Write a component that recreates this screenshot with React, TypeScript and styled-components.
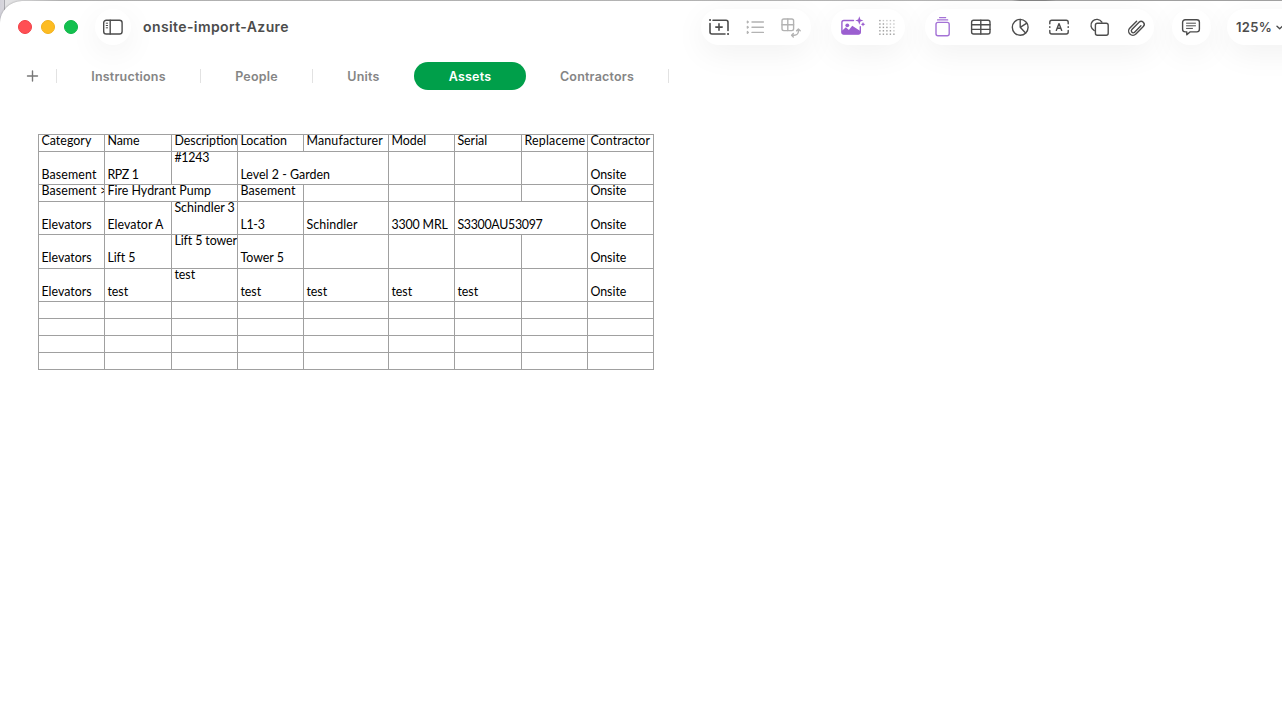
import React from "react";
import styled, { createGlobalStyle } from "styled-components";

const GlobalStyle = createGlobalStyle`
  * { box-sizing: border-box; }
  html, body, #root { height: 100%; }
  body { margin: 0; overflow: hidden; background: #c4c4c6; font-family: Inter, "Liberation Sans", sans-serif; }
`;

const Desktop = styled.div`
  height: 721px;
  padding-top: 1px;
  overflow: hidden;
  background: linear-gradient(90deg, #d3d2da 0, #d8d7dd 4px, #a9a9af 4.5px, #e3e3e5 5.5px, #dededf 30px, #c2c2c2 60px, #c6c6c6 1012px, #8f8f8f 1020px, #8f8f8f 1045px, #b0b0b0 1056px, #b0b0b0 1282px);
`;

const Window = styled.main`
  height: 720px;
  background: #fff;
  border-top-left-radius: 22px;
  box-shadow: 0 0 2px rgba(0, 0, 0, 0.35);
  overflow: hidden;
`;

const TitleBar = styled.header`
  display: flex;
  align-items: center;
  height: 52px;
  padding-left: 18px;
  width: 1320px;
`;

const Lights = styled.div`
  display: flex;
  gap: 9px;
`;

const Light = styled.span<{ $fill: string; $edge: string }>`
  width: 14px;
  height: 14px;
  border-radius: 50%;
  background: ${(p) => p.$fill};
  border: 1px solid ${(p) => p.$edge};
`;

const Pill = styled.div<{ $width: number; $gap: number }>`
  position: relative;
  flex: none;
  width: ${(p) => p.$width}px;
  height: 36px;
  margin-left: ${(p) => p.$gap}px;
  border-radius: 18px;
  background: #fff;
  box-shadow: 0 8px 32px rgba(0, 0, 0, 0.06);
  display: flex;
  align-items: center;
`;

const Title = styled.h1`
  margin: 0 0 0 12px;
  width: 558px;
  font-size: 14px;
  line-height: 20px;
  font-weight: 600;
  letter-spacing: 0.4px;
  color: #4c4c4c;
  white-space: nowrap;
`;

const Icon = styled.svg<{ $gap: number; $color?: string }>`
  flex: none;
  width: 24px;
  height: 24px;
  margin-left: ${(p) => p.$gap}px;
  overflow: visible;
  fill: none;
  stroke: ${(p) => p.$color ?? "#4c4c4c"};
  stroke-width: 1.4;
  stroke-linecap: round;
  stroke-linejoin: round;
`;

const Zoom = styled.span`
  margin-left: 9px;
  width: 38px;
  font-size: 13px;
  font-weight: 600;
  color: #4c4c4c;
  letter-spacing: 0.35px;
`;

const Tabs = styled.nav`
  display: flex;
  align-items: center;
  height: 28px;
  margin-top: 9px;
  padding-left: 21px;
`;

const Tab = styled.button<{ $width: number; $active?: boolean }>`
  flex: none;
  width: ${(p) => p.$width}px;
  height: 28px;
  padding: 0;
  border: 0;
  border-radius: 14px;
  background: ${(p) => (p.$active ? "#009f4a" : "transparent")};
  color: ${(p) => (p.$active ? "#fff" : "#858585")};
  font: 600 12.5px/29px Inter, "Liberation Sans", sans-serif;
  letter-spacing: 0.2px;
  text-align: center;
`;

const TabGap = styled.span`
  width: 11px;
`;

const Divider = styled.span`
  width: 1px;
  height: 14px;
  background: #e2e2e2;
`;

const Sheet = styled.section`
  display: grid;
  grid-template-columns: 66px 67px 66px 66px 85px 66px 67px 66px 66px;
  grid-template-rows: 17px 33px 17px 33px 34px 33px 17px 17px 17px 17px;
  width: 616px;
  margin: 44px 0 0 38px;
  border-left: 1px solid #a0a0a0;
  border-top: 1px solid #a0a0a0;
`;

const Cell = styled.div<{ $span: number; $low: boolean; $track: number }>`
  grid-column: span ${(p) => p.$span};
  min-width: 0;
  padding: ${(p) => (p.$low ? 17 : 0)}px 0 0 2.4px;
  border-right: 1px solid #a0a0a0;
  border-bottom: 1px solid #a0a0a0;
  overflow: hidden;
  font: 400 12.4px/12px Lato, sans-serif;
  letter-spacing: ${(p) => p.$track}px;
  white-space: nowrap;
  color: #000;
`;

type CellData = { text: string; span?: number; top?: boolean; track?: number };
const c = (text = "", track = 0, extra: Partial<CellData> = {}): CellData => ({ text, track, ...extra });

const rows: { tall: boolean; cells: CellData[] }[] = [
  { tall: false, cells: [c("Category", 0.05), c("Name"), c("Description"), c("Location"), c("Manufacturer", 0.18), c("Model"), c("Serial"), c("Replaceme", 0.22), c("Contractor", 0.08)] },
  { tall: true, cells: [c("Basement", 0.16), c("RPZ 1", -0.4), c("#1243", -0.25, { top: true }), c("Level 2 - Garden", 0.03, { span: 2 }), c(), c(), c(), c("Onsite")] },
  { tall: false, cells: [c("Basement >", 0.16), c("Fire Hydrant Pump", 0.04, { span: 2 }), c("Basement", 0.16), c(), c(), c(), c(), c("Onsite")] },
  { tall: true, cells: [c("Elevators", 0.03), c("Elevator A", 0.05), c("Schindler 3", 0, { top: true }), c("L1-3", -0.3), c("Schindler", 0.1), c("3300 MRL", -0.15), c("S3300AU53097", -0.3, { span: 2 }), c("Onsite")] },
  { tall: true, cells: [c("Elevators", 0.03), c("Lift 5", -0.1), c("Lift 5 tower", -0.1, { top: true }), c("Tower 5"), c(), c(), c(), c(), c("Onsite")] },
  { tall: true, cells: [c("Elevators", 0.03), c("test"), c("test", 0, { top: true }), c("test"), c("test"), c("test"), c("test"), c(), c("Onsite")] },
  ...Array.from({ length: 4 }, () => ({ tall: false, cells: Array.from({ length: 9 }, () => c()) })),
];

const dotRows = [0, 1, 2, 3, 4];

export default function App() {
  return (
    <>
      <GlobalStyle />
      <Desktop>
        <Window>
          <TitleBar>
            <Lights>
              <Light $fill="#ff4f54" $edge="#f03f45" />
              <Light $fill="#fdbc22" $edge="#f0b01c" />
              <Light $fill="#13c04f" $edge="#0fb548" />
            </Lights>
            <Pill $width={36} $gap={17}>
              <Icon $gap={6} viewBox="0 0 24 24">
                <rect x="2.7" y="5.2" width="18.4" height="13.8" rx="2.6" />
                <path d="M9.2 5.2V19" />
                <path d="M5.2 8.2h1.4M5.2 10.5h1.4M5.2 12.8h1.4" strokeWidth="1" />
              </Icon>
            </Pill>
            <Title>onsite-import-Azure</Title>
            <Pill $width={110} $gap={0}>
              <Icon $gap={6} viewBox="0 0 24 24">
                <path d="M6 5.2H19a2 2 0 0 1 2 2v8.3M18 19H5a2 2 0 0 1-2-2V8.5M12 8.9v6.4M8.8 12.1h6.4" strokeWidth="1.6" />
                <path d="M3 5.1h.1M21 19h.1" strokeWidth="2" />
              </Icon>
              <Icon $gap={12} $color="#b3b3b3" viewBox="0 0 24 24">
                <path d="M9 7h11.4M9 12.2h11.4M9 17.4h11.4" />
                <path d="M4.4 6.2v1.6l.9-.8zM4.4 11.4v1.6l.9-.8zM4.4 16.6v1.6l.9-.8z" />
              </Icon>
              <Icon $gap={12} $color="#b3b3b3" viewBox="0 0 24 24">
                <rect x="3" y="4" width="11.6" height="11.6" rx="1.8" />
                <path d="M8.8 4v11.6M3 9.8h11.6" />
                <path d="M12.8 20.3h2.6a4 4 0 0 0 4-4v-2M14.3 18.6l-1.7 1.7 1.7 1.7M17.6 15.8l1.8-1.8 1.8 1.8" />
              </Icon>
            </Pill>
            <Pill $width={74} $gap={20}>
              <Icon $gap={8} $color="#9b5fd0" viewBox="0 0 24 24">
                <path d="M14.5 5.5H4.9a2 2 0 0 0-2 2v9.6a2 2 0 0 0 2 2h14.4a2 2 0 0 0 2-2v-5.4" />
                <path d="M2.7 16l4.2-3.7 3 2.7 3.3-4.2 8.1 5.2v1.6a1.7 1.7 0 0 1-1.7 1.7H4.2a1.5 1.5 0 0 1-1.5-1.5z" fill="#9b5fd0" stroke="none" />
                <circle cx="8.3" cy="10.3" r="1.9" fill="#9b5fd0" stroke="none" />
                <path d="M20.3 1.2l1.1 3.2 3 1.1-3 1.1-1.1 3.2-1.1-3.2-3-1.1 3-1.1z" fill="#9b5fd0" stroke="none" />
                <path d="M24 7l.7 1.6 1.6.7-1.6.7-.7 1.6-.7-1.6-1.6-.7 1.6-.7z" fill="#9b5fd0" stroke="none" />
              </Icon>
              <Icon $gap={12} viewBox="0 0 24 24">
                {dotRows.map((r) =>
                  dotRows.map((k) => (
                    <rect
                      key={`${r}-${k}`}
                      x={4.2 + k * 3.5}
                      y={4.9 + r * 3.4}
                      width="1.4"
                      height="1.4"
                      fill={k > r ? "#c8c8c8" : "#9c9c9c"}
                      stroke="none"
                    />
                  ))
                )}
              </Icon>
            </Pill>
            <Pill $width={229} $gap={20}>
              <Icon $gap={6} $color="#a472d6" viewBox="0 0 24 24">
                <rect x="5" y="7.4" width="13.2" height="13.4" rx="2" />
                <path d="M6.5 4.9h10.2M8.5 2.6h6.2" strokeWidth="1.2" />
              </Icon>
              <Icon $gap={14} viewBox="0 0 24 24">
                <rect x="2.6" y="5.2" width="18.4" height="13.8" rx="2" />
                <path d="M11.8 5.2V19M2.6 9.8H21M2.6 14.4H21" />
              </Icon>
              <Icon $gap={15} viewBox="0 0 24 24">
                <circle cx="12.2" cy="12.3" r="7.9" />
                <path d="M12.2 4.4v7.9l6.6-4.1M12.2 12.3l5.4 5.6" />
              </Icon>
              <Icon $gap={15} viewBox="0 0 24 24">
                <path d="M2.8 8.8V7.2a2 2 0 0 1 2-2h14.4a2 2 0 0 1 2 2v1.6M2.8 15.4V17a2 2 0 0 0 2 2h14.4a2 2 0 0 0 2-2v-1.6M2.8 11.6v.8M21.2 11.6v.8" />
                <path d="M9.3 15.4l2.7-6.8 2.7 6.8M10.2 13.2h3.6" />
              </Icon>
              <Icon $gap={16} viewBox="0 0 24 24">
                <path d="M7.3 15.6A5.9 5.9 0 1 1 14.9 7.2" />
                <rect x="8.4" y="8.2" width="12.8" height="12" rx="2" />
              </Icon>
              <Icon $gap={14} viewBox="0 0 24 24">
                <path d="M16.7 10.8l-6.3 6.4a1.9 1.9 0 0 1-2.7-2.7l7.1-7.2a3 3 0 0 1 4.3 4.2l-7.4 7.6a4.2 4.2 0 0 1-6-6l6.7-6.8" transform="translate(-.8 0)" />
              </Icon>
            </Pill>
            <Pill $width={39} $gap={18}>
              <Icon $gap={7} viewBox="0 0 24 24">
                <path d="M6.2 4.7h11.6a2.6 2.6 0 0 1 2.6 2.6v7a2.6 2.6 0 0 1-2.6 2.6H11l-3.2 2.9v-2.9H6.2a2.6 2.6 0 0 1-2.6-2.6v-7a2.6 2.6 0 0 1 2.6-2.6z" />
                <path d="M7.5 8.2h9M7.5 10.8h9M7.5 13.4h6" strokeWidth="1" />
              </Icon>
            </Pill>
            <Pill $width={90} $gap={16}>
              <Zoom>125%</Zoom>
              <Icon $gap={0} viewBox="0 0 24 24">
                <path d="M3 11.3l2.7 2.5 2.7-2.5" />
              </Icon>
            </Pill>
          </TitleBar>
          <Tabs>
            <Icon $gap={0} $color="#777" viewBox="0 0 24 24">
              <path d="M11.5 7v10M6.5 12h10" />
            </Icon>
            <TabGap />
            <Divider />
            <Tab $width={143}>Instructions</Tab>
            <Divider />
            <Tab $width={111}>People</Tab>
            <Divider />
            <Tab $width={101}>Units</Tab>
            <Tab $width={112} $active>Assets</Tab>
            <Tab $width={142}>Contractors</Tab>
            <Divider />
          </Tabs>
          <Sheet>
            {rows.map((row, r) =>
              row.cells.map((cell, k) => (
                <Cell key={`${r}-${k}`} $span={cell.span ?? 1} $low={row.tall && !cell.top} $track={cell.track ?? 0}>
                  {cell.text}
                </Cell>
              ))
            )}
          </Sheet>
        </Window>
      </Desktop>
    </>
  );
}
